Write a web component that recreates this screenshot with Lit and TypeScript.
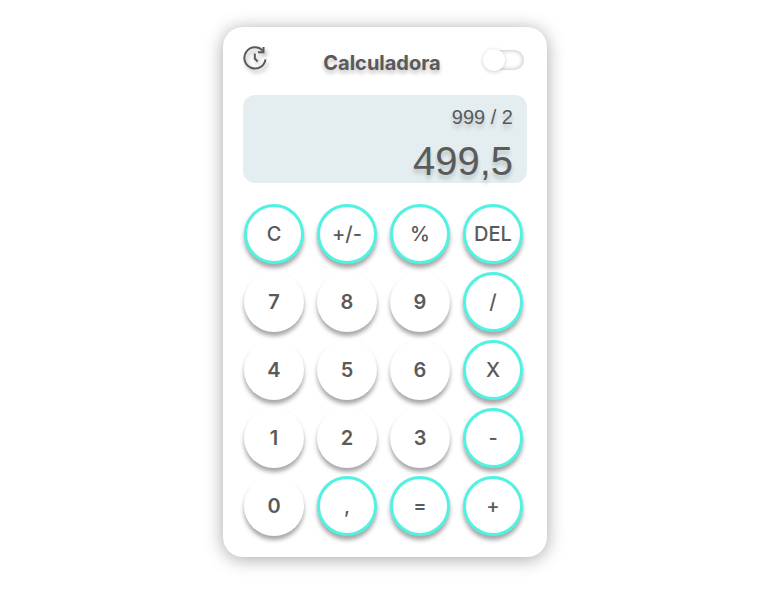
import { LitElement, html, css } from "lit";
import { customElement } from "lit/decorators.js";
import { classMap } from "lit/directives/class-map.js";

const KEYS = [
  "C", "+/-", "%", "DEL",
  "7", "8", "9", "/",
  "4", "5", "6", "X",
  "1", "2", "3", "-",
  "0", ",", "=", "+",
];

@customElement("app-root")
export class AppRoot extends LitElement {
  static styles = css`
    :host {
      display: flex;
      justify-content: center;
      box-sizing: border-box;
      height: 596px;
      padding: 27px 6px 0 0;
      background: #fff;
      color: #5a5a5a;
      font-family: Inter, sans-serif;
    }
    .card {
      box-sizing: border-box;
      width: 324px;
      height: 530px;
      padding: 18px 20px 0;
      border-radius: 20px;
      background: #fff;
      box-shadow: 0 2px 18px rgba(0, 0, 0, 0.35);
    }
    header {
      display: flex;
      justify-content: space-between;
      height: 50px;
      padding-right: 3px;
    }
    .history {
      width: 26px;
      height: 26px;
      filter: drop-shadow(2px 3px 2px rgba(0, 0, 0, 0.3));
    }
    h1 {
      margin: 6px 0 0 11px;
      font-size: 20px;
      line-height: 24px;
      font-weight: 700;
      text-shadow: 0 3px 4px rgba(0, 0, 0, 0.25);
    }
    .switch {
      display: flex;
      align-items: center;
      width: 40px;
      height: 20px;
      margin-top: 5px;
      border-radius: 10px;
      box-shadow: inset 0 0 5px rgba(0, 0, 0, 0.3);
    }
    .knob {
      width: 22px;
      height: 22px;
      margin-left: -1px;
      flex: none;
      border-radius: 50%;
      background: #fff;
      box-shadow: 0 1px 4px rgba(0, 0, 0, 0.2);
    }
    .display {
      box-sizing: border-box;
      height: 88px;
      padding: 10px 14px 0;
      border-radius: 12px;
      background: #e4eef1;
      text-align: right;
      font-family: "Liberation Sans", Arial, sans-serif;
      text-shadow: 0 4px 4px rgba(0, 0, 0, 0.2);
    }
    .expression {
      font-size: 20px;
      line-height: 24px;
    }
    .result {
      margin-top: 9px;
      font-size: 40px;
      line-height: 46px;
    }
    .keys {
      display: grid;
      grid-template-columns: repeat(4, 60px);
      gap: 8px 13px;
      margin: 21px 0 0 1px;
    }
    button {
      box-sizing: border-box;
      height: 60px;
      padding: 0;
      border: 0;
      border-radius: 50%;
      background: #fff;
      color: inherit;
      font: 600 20px/24px Inter, sans-serif;
      box-shadow: 0 4px 4px rgba(0, 0, 0, 0.35);
    }
    .accent {
      border: 3px solid #50f2e1;
      font-weight: 500;
    }
  `;

  render() {
    return html`
      <main class="card">
        <header>
          <svg class="history" viewBox="0 0 26 26" fill="none" stroke="#5a5a5a" stroke-width="2">
            <path d="M20.2 6.2A10.6 10.6 0 1 0 22.5 14.3" />
            <path d="M20.5 2V7.3H15" />
            <path d="M11.8 8.5V13.5L14.6 16.7" />
          </svg>
          <h1>Calculadora</h1>
          <div class="switch"><div class="knob"></div></div>
        </header>
        <section class="display">
          <div class="expression">999 / 2</div>
          <div class="result">499,5</div>
        </section>
        <section class="keys">
          ${KEYS.map(
            (key) => html`<button class=${classMap({ accent: !/^\d$/.test(key) })}>${key}</button>`
          )}
        </section>
      </main>
    `;
  }
}
